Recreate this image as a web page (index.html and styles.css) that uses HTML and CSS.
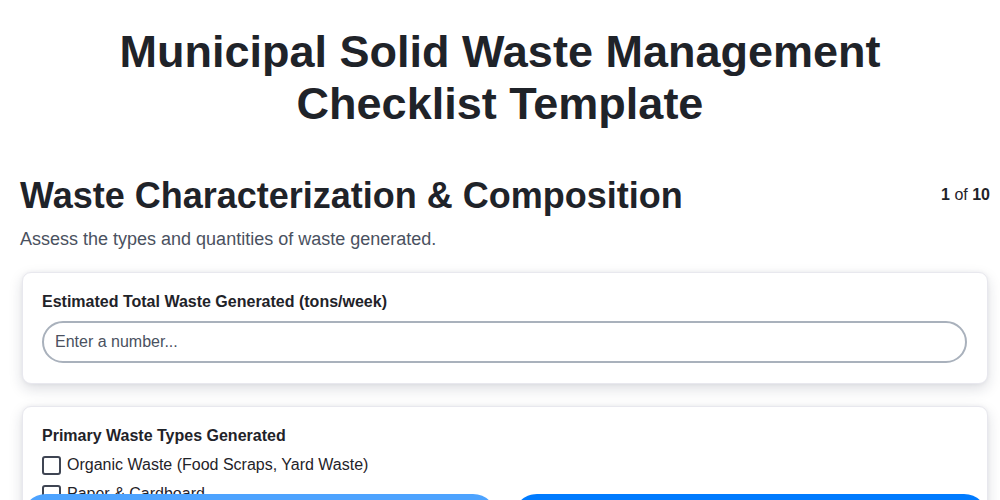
FILE: index.html
```html
<!DOCTYPE html>
<html lang="en">
<head>
<meta charset="utf-8">
<title>Municipal Solid Waste Management Checklist Template</title>
<link rel="stylesheet" href="styles.css">
</head>
<body>
<header class="header">
  <h1 class="title">Municipal Solid Waste Management Checklist Template</h1>
</header>
<main class="page">
  <div class="section-head">
    <h2 class="section-title">Waste Characterization &amp; Composition</h2>
    <div class="progress"><b>1</b> of <b>10</b></div>
  </div>
  <p class="section-desc">Assess the types and quantities of waste generated.</p>

  <div class="card">
    <label class="field-label">Estimated Total Waste Generated (tons/week)</label>
    <input class="text-input" type="text" placeholder="Enter a number...">
  </div>

  <div class="card">
    <div class="field-label">Primary Waste Types Generated</div>
    <label class="check-row"><span class="box"></span>Organic Waste (Food Scraps, Yard Waste)</label>
    <label class="check-row"><span class="box"></span>Paper &amp; Cardboard</label>
    <label class="check-row"><span class="box"></span>Plastics</label>
    <label class="check-row"><span class="box"></span>Glass</label>
    <label class="check-row"><span class="box"></span>Metals</label>
  </div>
</main>
<nav class="nav">
  <button class="btn btn-prev">Previous</button>
  <button class="btn btn-next">Next</button>
</nav>
</body>
</html>
```
FILE: styles.css
```css
* { box-sizing: border-box; }
html, body { margin: 0; padding: 0; background: #ffffff; }
body {
  font-family: "Liberation Sans", Arial, sans-serif;
  color: #1f2329;
}
.header {
  padding: 26px 0 44px;
}
.title {
  max-width: 800px;
  margin: 0 auto;
  text-align: center;
  font-size: 45px;
  line-height: 52px;
  font-weight: 700;
  color: #1f2329;
}
.page {
  padding: 0 10px 120px 20px;
}
.section-head {
  display: flex;
  justify-content: space-between;
  align-items: flex-start;
}
.section-title {
  margin: 0;
  font-size: 36px;
  line-height: 44px;
  font-weight: 700;
  color: #1f2329;
}
.progress {
  font-size: 16px;
  line-height: 20px;
  margin-top: 11px;
  color: #1f2329;
}
.progress b { font-weight: 700; }
.section-desc {
  margin: 9px 0 21px;
  font-size: 18px;
  line-height: 24px;
  color: #4a5160;
}
.card {
  margin: 0 2px 22px;
  background: #ffffff;
  border: 1px solid #e8e8ee;
  border-radius: 9px;
  box-shadow: 0 5px 14px rgba(30, 35, 60, 0.15), 0 0 4px rgba(30, 35, 60, 0.05);
  padding: 19px 20px 20px 19px;
  display: flex;
  flex-direction: column;
}
.field-label {
  display: block;
  font-size: 16px;
  line-height: 20px;
  font-weight: 700;
  color: #1f2329;
  margin-bottom: 9px;
}
.text-input {
  width: 100%;
  height: 42px;
  border: 2px solid #a9b1bc;
  border-radius: 21px;
  padding: 0 11px;
  font-family: "Liberation Sans", Arial, sans-serif;
  font-size: 16px;
  color: #1f2329;
  background: #fff;
  outline: none;
}
.text-input::placeholder { color: #4a5160; }
.check-row {
  display: flex;
  align-items: center;
  font-size: 16px;
  line-height: 20px;
  color: #1f2329;
  margin-bottom: 9px;
}
.box {
  width: 19px;
  height: 19px;
  border: 2px solid #3f4553;
  border-radius: 3px;
  margin-right: 6px;
  flex: none;
}
.nav {
  position: fixed;
  left: 22px;
  right: 12px;
  top: 494px;
  display: flex;
  gap: 16px;
}
.btn {
  flex: 1;
  height: 48px;
  border: none;
  border-radius: 24px;
  color: #fff;
  font-family: "Liberation Sans", Arial, sans-serif;
  font-size: 16px;
  font-weight: 700;
}
.btn-prev { background: #4da3ff; }
.btn-next { background: #007bff; }
```
